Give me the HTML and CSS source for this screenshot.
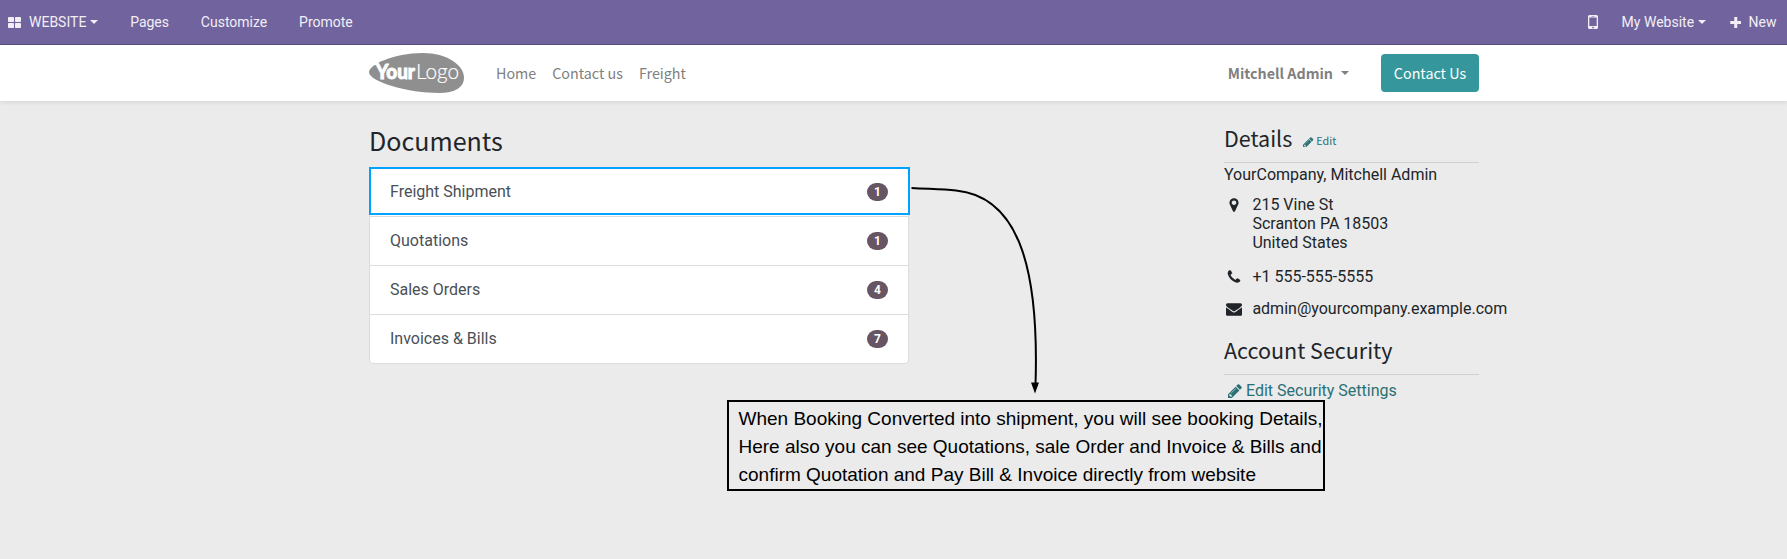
FILE: index.html
```html
<!DOCTYPE html>
<html lang="en">
<head>
<meta charset="utf-8">
<title>My Account | My Website</title>
<link rel="stylesheet" href="styles.css">
</head>
<body>
<svg width="0" height="0" class="defs">
  <symbol id="pencil" viewBox="128 128 1536 1536"><path d="M491 1536l91-91-235-235-91 91v107h128v128h107zm523-928q0-22-22-22-10 0-17 7l-542 542q-7 7-7 17 0 22 22 22 10 0 17-7l542-542q7-7 7-17zm-54-192l416 416-832 832h-416v-416l832-832zm683 96q0 53-37 90l-166 166-416-416 166-165q36-38 90-38 53 0 91 38l235 234q37 39 37 91z"/></symbol>
</svg>
<nav class="topbar">
  <a class="top-item website"><svg class="ic-grid" viewBox="0 0 13 11"><rect width="6" height="5" rx=".8"/><rect x="7" width="6" height="5" rx=".8"/><rect y="6" width="6" height="5" rx=".8"/><rect x="7" y="6" width="6" height="5" rx=".8"/></svg><span class="t-website">WEBSITE</span><i class="caret"></i></a>
  <a class="top-item">Pages</a>
  <a class="top-item">Customize</a>
  <a class="top-item">Promote</a>
  <span class="spacer"></span>
  <a class="top-item mobile"><svg class="ic-mobile" viewBox="0 0 10 14"><path fill-rule="evenodd" d="M1.5 0h7A1.5 1.5 0 0 1 10 1.5v11A1.500 1.500 0 0 1 8.500 14h-7A1.500 1.500 0 0 1 0 12.500v-11A1.500 1.500 0 0 1 1.500 0zM1.300 2.500v8.500h7.400V2.500zM3.500 1v.6h3V1zM5 11.700a.8.8 0 1 0 .01 0z"/></svg></a>
  <a class="top-item mysite">My Website<i class="caret"></i></a>
  <a class="top-item new"><svg class="ic-plus" viewBox="0 0 11 11"><path d="M4 0h3v4h4v3H7v4H4V7H0V4h4z"/></svg>New</a>
</nav>
<header class="header">
  <svg class="logo" viewBox="0 0 95 40">
    <path fill="#8f8f8f" d="M0 19C0 12 24 0 54 0 78 0 95 12 95 25 95 34 86 40 70 40 40 40 0 29 0 19z"/>
    <path fill="#fff" d="M4 10h6v2H4z"/>
    <text x="7" y="25.500" class="logo-your" textLength="39" lengthAdjust="spacingAndGlyphs">Your</text>
    <text x="47" y="25.500" class="logo-logo" textLength="43" lengthAdjust="spacingAndGlyphs">Logo</text>
  </svg>
  <nav class="menu"><a>Home</a><a>Contact us</a><a>Freight</a></nav>
  <a class="user">Mitchell Admin<i class="caret"></i></a>
  <a class="cta">Contact Us</a>
</header>
<main class="page">
  <section class="docs">
    <h3 class="docs-title">Documents</h3>
    <div class="list">
      <a class="row active"><span>Freight Shipment</span><b class="badge">1</b></a>
      <a class="row"><span>Quotations</span><b class="badge">1</b></a>
      <a class="row"><span>Sales Orders</span><b class="badge">4</b></a>
      <a class="row"><span>Invoices &amp; Bills</span><b class="badge">7</b></a>
    </div>
  </section>
  <aside class="side">
    <h4 class="side-title">Details<a class="edit"><svg class="ic-edit"><use href="#pencil"/></svg>Edit</a></h4>
    <div class="company">YourCompany, Mitchell Admin</div>
    <div class="contact address"><svg class="ic" viewBox="0 0 1792 1792"><path d="M1152 640q0-106-75-181t-181-75-181 75-75 181 75 181 181 75 181-75 75-181zm256 0q0 109-33 179l-364 774q-16 33-47.500 52t-67.500 19-67.500-19-46.500-52l-365-774q-33-70-33-179 0-212 150-362t362-150 362 150 150 362z"/></svg><div>215 Vine St<br>Scranton PA 18503<br>United States</div></div>
    <div class="contact phone"><svg class="ic" viewBox="0 0 1792 1792"><path d="M1600 1240q0 27-10 70.500t-21 68.500q-21 50-122 106-94 51-186 51-27 0-53-3.500t-57.500-12.500-47-14.500-55.500-20.500-49-18q-98-35-175-83-127-79-264-216t-216-264q-48-77-83-175-3-9-18-49t-20.500-55.500-14.500-47-12.500-57.500-3.500-53q0-92 51-186 56-101 106-122 25-11 68.500-21t70.500-10q14 0 21 3 18 6 53 76 11 19 30 54t35 63.500 31 53.500q3 4 17.500 25t21.500 35.500 7 28.500q0 20-28.500 50t-62 55-62 53-28.500 46q0 9 5 22.500t8.500 20.500 14 24 11.500 19q76 137 174 235t235 174q2 1 19 11.500t24 14 20.500 8.500 22.500 5q18 0 46-28.500t53-62 55-62 50-28.500q14 0 28.500 7t35.500 21.500 25 17.500q25 15 53.500 31t63.500 35 54 30q70 35 76 53 3 7 3 21z"/></svg><div>+1 555-555-5555</div></div>
    <div class="contact mail"><svg class="ic" viewBox="0 0 1792 1792"><path d="M1792 710v794q0 66-47 113t-113 47h-1472q-66 0-113-47t-47-113v-794q44 49 101 87 362 246 497 345 57 42 92.500 65.500t94.500 48 110 24.500h2q51 0 110-24.500t94.500-48 92.500-65.500q170-123 498-345 57-39 100-87zm0-294q0 79-49 151t-122 123q-376 261-468 325-10 7-42.500 31t-54 38.500-52 32.500-57.500 27-50 9h-2q-23 0-50-9t-57.500-27-52-32.500-54-38.500-42.500-31q-91-64-262-182.500t-205-142.500q-62-42-117-115.500t-55-136.500q0-78 41.500-130t118.500-52h1472q65 0 112.500 47t47.500 113z"/></svg><div>admin@yourcompany.example.com</div></div>
    <h4 class="side-title security">Account Security</h4>
    <a class="settings"><svg class="ic-settings"><use href="#pencil"/></svg>Edit Security Settings</a>
  </aside>
</main>
<svg class="arrow" viewBox="0 0 140 220"><path fill="none" stroke="#000" stroke-width="2" d="M1.500 8C18 9 32 9 46 10.500C112 17 129 96 125.500 205"/><path d="M121 202.500h8l-4 11z"/></svg>
<div class="note">When Booking Converted into shipment, you will see booking Details,<br>Here also you can see Quotations, sale Order and Invoice &amp; Bills and<br>confirm Quotation and Pay Bill &amp; Invoice directly from website</div>
</body>
</html>
```
FILE: styles.css
```css
* { box-sizing: border-box; }
body { margin: 0; height: 559px; overflow: hidden; background: #ebebeb; color: #212529; font: 16px/24px Roboto, sans-serif; }
svg { fill: currentColor; flex: none; }
.defs { position: absolute; }
.caret { display: inline-block; border: 4px solid transparent; border-top-color: currentColor; border-bottom: 0; }

.topbar { display: flex; height: 45px; padding-left: 8px; background: #71639e; border-bottom: 1px solid #5a4f7f; color: #f1eff5; font-size: 14px; line-height: 44px; }
.top-item { display: flex; align-items: center; padding-right: 31.800px; }
.top-item .caret { margin-left: 4px; }
.ic-grid { width: 13px; height: 11px; margin-right: 8px; }
.spacer { flex: 1; }
.mobile { padding-right: 23.500px; }
.ic-mobile { width: 10px; height: 14px; }
.mysite { padding-right: 23.500px; }
.new { padding-right: 10.500px; }
.ic-plus { width: 11.500px; height: 11px; margin-right: 7.500px; }

.header { position: relative; display: flex; align-items: center; height: 56px; padding: 0 308px 0 369px; background: #fff; box-shadow: 0 2px 4px rgba(0, 0, 0, .075); font-family: "Noto Sans CJK SC", sans-serif; font-size: 14.300px; color: #808080; }
.logo { width: 95px; height: 40px; }
.logo-your { font: 900 20px Lato, sans-serif; fill: #fff; stroke: #fff; stroke-width: .9px; }
.logo-logo { font: 300 21.500px Lato, sans-serif; fill: #fff; stroke: #fff; stroke-width: .2px; }
.menu { display: flex; gap: 16px; margin-left: 32px; flex: 1; }
.user { display: flex; align-items: center; font-weight: 700; margin-right: 32px; }
.user .caret { margin-left: 8px; }
.cta { width: 98px; height: 38px; border-radius: 4px; background: #35979c; color: #fff; text-align: center; line-height: 38px; }

.page { display: flex; justify-content: space-between; padding: 0 308px 0 369px; }
.docs { width: 541px; padding-top: 22px; }
.docs-title { margin: 0 0 10px; font: 400 25.070px/34px "Noto Sans CJK SC", sans-serif; }
.list { width: 540px; background: #fff; border: 1px solid #dcdcdc; border-radius: 4px; }
.row { display: flex; justify-content: space-between; align-items: center; height: 49px; padding: 0 20px; border-top: 1px solid #dcdcdc; color: #495057; }
.active { height: 48px; border: 0; margin: -1px -1px 1px; padding: 2px 22px 0 21px; width: 541px; outline: 2px solid #00a2ff; outline-offset: -2px; }
.badge { width: 21px; height: 18px; border-radius: 9px; background: #685563; color: #fff; font-size: 12px; line-height: 18px; text-align: center; }

.side { width: 255px; padding-top: 22px; white-space: nowrap; }
.side-title { display: flex; align-items: baseline; height: 40px; margin: 0; border-bottom: 1px solid #d0d0d0; font: 400 21.500px/29px "Noto Sans CJK SC", sans-serif; }
.edit { margin: -2px 0 2px 11px; font-size: 10.800px; transform: translateY(-2px); color: #2a7074; }
.ic-edit { width: 10.500px; height: 10.500px; margin-right: 2.500px; vertical-align: -2px; }
.company { line-height: 24px; }
.contact { display: flex; padding-left: 2px; line-height: 19px; }
.ic { width: 16px; height: 16px; margin: 2px 10.400px 0 0; }
.address { margin-top: 8px; }
.phone { margin-top: 15px; }
.mail { margin-top: 13px; }
.security { margin-top: 17px; }
.settings { display: flex; align-items: center; padding-left: 4px; height: 32px; color: #2a7074; }
.ic-settings { width: 14px; height: 14px; margin-right: 4px; }

.arrow { position: absolute; left: 910px; top: 180px; width: 140px; height: 220px; color: #000; }
.note { position: absolute; left: 727px; top: 400px; width: 598px; height: 91px; padding: 3px 0 0 9.500px; border: 2px solid #000; color: #000; font: 19px/28px "Liberation Sans", Arial, sans-serif; white-space: nowrap; }
```
